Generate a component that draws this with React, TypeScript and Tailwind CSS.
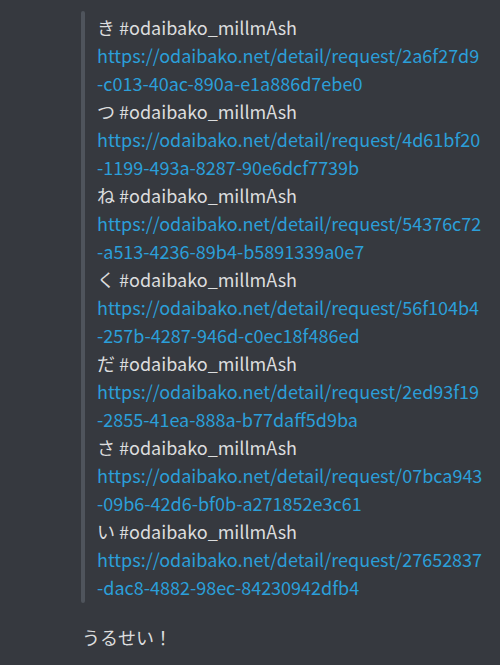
const ENTRIES: { kana: string; id: string }[] = [
  { kana: 'き', id: '2a6f27d9-c013-40ac-890a-e1a886d7ebe0' },
  { kana: 'つ', id: '4d61bf20-1199-493a-8287-90e6dcf7739b' },
  { kana: 'ね', id: '54376c72-a513-4236-89b4-b5891339a0e7' },
  { kana: 'く', id: '56f104b4-257b-4287-946d-c0ec18f486ed' },
  { kana: 'だ', id: '2ed93f19-2855-41ea-888a-b77daff5d9ba' },
  { kana: 'さ', id: '07bca943-09b6-42d6-bf0b-a271852e3c61' },
  { kana: 'い', id: '27652837-dac8-4882-98ec-84230942dfb4' },
]

const TAG = '#odaibako_millmAsh'

export default function App() {
  return (
    <div
      className="w-[500px] h-[665px] bg-[#36393f] text-[#dcddde] text-[18px] leading-[28px] overflow-hidden"
      style={{ fontFamily: '"Noto Sans CJK JP", "Noto Sans", sans-serif' }}
    >
      {/* quoted block */}
      <div className="flex pl-[81px] pt-[11px]">
        <div className="w-[4px] rounded-full bg-[#4f545c] shrink-0" />
        <div className="pl-[12px] pt-[2px] pb-[2px]">
          {ENTRIES.map((e) => {
            const [head, ...rest] = e.id.split('-')
            return (
              <div key={e.id}>
                <div>
                  {e.kana} {TAG}
                </div>
                <a className="block text-[#2b9fd9]" href="#">
                  https://odaibako.net/detail/request/{head}
                  <br />-{rest.join('-')}
                </a>
              </div>
            )
          })}
        </div>
      </div>

      <div className="pl-[82px] pt-[20px]">うるせい！</div>
    </div>
  )
}
